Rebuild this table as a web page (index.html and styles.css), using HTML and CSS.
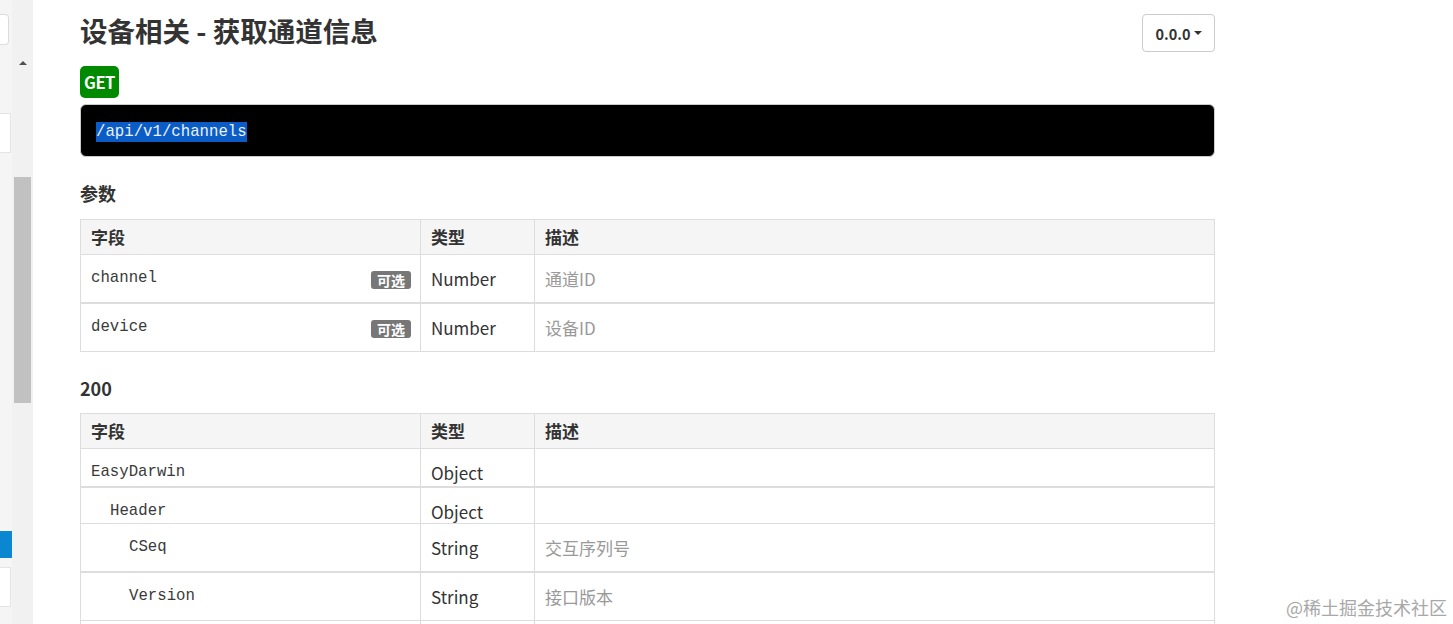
FILE: index.html
```html
<!DOCTYPE html>
<html lang="zh-CN">
<head>
<meta charset="utf-8">
<title>设备相关 - 获取通道信息</title>
<link rel="stylesheet" href="styles.css">
</head>
<body>
<div class="page">
  <aside class="sidebar">
    <div class="side-col">
      <div class="sbox sbox-top"></div>
      <div class="sbox sbox-mid"></div>
      <div class="sbox-active"></div>
      <div class="sbox sbox-bottom"></div>
    </div>
    <div class="scrollbar">
      <div class="scroll-arrow"></div>
      <div class="scroll-thumb"></div>
    </div>
  </aside>
  <main class="main">
    <div class="header">
      <h1 class="title">设备相关 - 获取通道信息</h1>
      <button class="version">0.0.0<span class="caret"></span></button>
    </div>
    <span class="method">GET</span>
    <div class="url"><span class="url-sel">/api/v1/channels</span></div>

    <h2 class="section">参数</h2>
    <table class="fields">
      <colgroup><col class="c1"><col class="c2"><col class="c3"></colgroup>
      <thead>
        <tr><th>字段</th><th>类型</th><th>描述</th></tr>
      </thead>
      <tbody>
        <tr class="tall">
          <td class="name"><div class="name-wrap"><span class="code">channel</span><span class="badge">可选</span></div></td>
          <td class="type">Number</td>
          <td class="desc">通道ID</td>
        </tr>
        <tr class="tall thick">
          <td class="name"><div class="name-wrap"><span class="code">device</span><span class="badge">可选</span></div></td>
          <td class="type">Number</td>
          <td class="desc">设备ID</td>
        </tr>
      </tbody>
    </table>

    <h2 class="section section-200">200</h2>
    <table class="fields">
      <colgroup><col class="c1"><col class="c2"><col class="c3"></colgroup>
      <thead>
        <tr><th>字段</th><th>类型</th><th>描述</th></tr>
      </thead>
      <tbody>
        <tr class="short">
          <td class="name"><span class="code">EasyDarwin</span></td>
          <td class="type">Object</td>
          <td class="desc"></td>
        </tr>
        <tr class="short thick">
          <td class="name"><span class="code lvl1">Header</span></td>
          <td class="type">Object</td>
          <td class="desc"></td>
        </tr>
        <tr class="tall">
          <td class="name"><span class="code lvl2">CSeq</span></td>
          <td class="type">String</td>
          <td class="desc">交互序列号</td>
        </tr>
        <tr class="tall thick">
          <td class="name"><span class="code lvl2">Version</span></td>
          <td class="type">String</td>
          <td class="desc">接口版本</td>
        </tr>
        <tr class="tall">
          <td class="name"></td>
          <td class="type"></td>
          <td class="desc"></td>
        </tr>
      </tbody>
    </table>
  </main>
  <div class="watermark">@稀土掘金技术社区</div>
</div>
</body>
</html>
```

FILE: styles.css
```css
html, body {
  margin: 0;
  padding: 0;
  background: #fff;
  height: 624px;
  overflow: hidden;
}

.page {
  display: flex;
  height: 624px;
  font-family: "Noto Sans CJK SC", "Noto Sans", sans-serif;
  color: #333;
}

/* ---------- sidebar ---------- */
.sidebar {
  width: 33px;
  flex: 0 0 33px;
  display: flex;
  height: 624px;
}

.side-col {
  width: 12px;
  background: #f5f5f5;
  display: flex;
  flex-direction: column;
}

.sbox {
  background: #fff;
  border: 1px solid #dcdcdc;
  border-left: none;
  box-sizing: border-box;
}

.sbox-top {
  width: 9px;
  height: 31px;
  margin-top: 14px;
  border-radius: 0 4px 4px 0;
}

.sbox-mid {
  width: 11px;
  height: 40px;
  margin-top: 68px;
  border-color: #e4e4e4;
}

.sbox-active {
  width: 12px;
  height: 27px;
  margin-top: 378px;
  background: #0a87d0;
}

.sbox-bottom {
  width: 11px;
  height: 40px;
  margin-top: 9px;
  border-color: #e4e4e4;
}

.scrollbar {
  width: 21px;
  background: #f1f1f1;
  display: flex;
  flex-direction: column;
  align-items: center;
}

.scroll-arrow {
  width: 0;
  height: 0;
  margin-top: 61px;
  border-left: 4px solid transparent;
  border-right: 4px solid transparent;
  border-bottom: 4px solid #505050;
}

.scroll-thumb {
  width: 17px;
  height: 226px;
  margin-top: 112px;
  background: #c1c1c1;
}

/* ---------- main ---------- */
.main {
  padding-left: 47px;
  width: 1135px;
}

.header {
  display: flex;
  justify-content: space-between;
  align-items: flex-start;
  padding-top: 12px;
}

.title {
  margin: 0;
  font-size: 27.5px;
  line-height: 36px;
  font-weight: 700;
  color: #333;
}

.version {
  margin-top: 2px;
  width: 73px;
  height: 38px;
  border: 1px solid #ccc;
  border-radius: 4px;
  background: #fff;
  font-family: "Noto Sans CJK SC", "Noto Sans", sans-serif;
  font-size: 14.5px;
  font-weight: 700;
  color: #333;
  padding: 0;
  display: flex;
  align-items: center;
  justify-content: center;
  gap: 3px;
}

.caret {
  width: 0;
  height: 0;
  border-left: 4px solid transparent;
  border-right: 4px solid transparent;
  border-top: 4px solid #333;
}

.method {
  display: inline-flex;
  align-items: center;
  justify-content: center;
  margin-top: 14px;
  width: 39px;
  height: 32px;
  background: #008a00;
  color: #fff;
  font-weight: 700;
  font-size: 16.5px;
  border-radius: 5px;
  letter-spacing: -0.5px;
}

.url {
  margin-top: 6px;
  height: 53px;
  box-sizing: border-box;
  background: #000;
  border: 1px solid #ccc;
  border-radius: 6px;
  display: flex;
  align-items: center;
  padding: 0 15px;
}

.url-sel {
  background: #0b5cc5;
  color: #eaf2ff;
  font-family: "Liberation Mono", "DejaVu Sans Mono", monospace;
  font-size: 15.7px;
  line-height: 20px;
  margin-top: 2px;
}

.section {
  margin: 23px 0 13px;
  font-size: 18px;
  line-height: 26px;
  font-weight: 700;
  color: #333;
}

.section-200 {
  margin-top: 23px;
  margin-bottom: 12px;
}

/* ---------- tables ---------- */
.fields {
  width: 1135px;
  border-collapse: collapse;
  table-layout: fixed;
}

.c1 { width: 340px; }
.c2 { width: 114px; }

.fields th,
.fields td {
  border: 1px solid #ddd;
  padding: 0 10px;
  text-align: left;
  vertical-align: top;
  box-sizing: border-box;
}

.fields th {
  background: #f5f5f5;
  height: 34px;
  font-size: 17px;
  line-height: 34px;
  font-weight: 700;
  color: #333;
}

.fields tr.thick td {
  border-top: 2px solid #ddd;
}

.fields tr.tall td { height: 48px; }
.fields tr.tall.thick td { height: 49px; }
.fields tr.short td { height: 38px; }
.fields tr.short.thick td { height: 37px; }

.fields td.name {
  padding-top: 13px;
  line-height: 20px;
  font-size: 15px;
}

.name-wrap {
  display: flex;
  justify-content: space-between;
  align-items: flex-start;
}

.code {
  font-family: "Liberation Mono", "DejaVu Sans Mono", monospace;
  font-size: 15.7px;
  line-height: 20px;
  color: #3a3a3a;
  display: block;
}

.lvl1 { padding-left: 19px; }
.lvl2 { padding-left: 38px; }

.badge {
  margin-top: 3px;
  margin-right: -1px;
  background: #777;
  color: #fff;
  font-size: 14px;
  font-weight: 700;
  line-height: 18px;
  height: 18px;
  padding: 0 6px;
  border-radius: 3px;
}

.fields td.type,
.fields td.desc {
  font-size: 17px;
  line-height: 22px;
  padding-top: 13px;
}

.fields td.type { color: #333; }
.fields td.desc { color: #999; }

.fields tr.short td.type { padding-top: 13px; }

.watermark {
  position: absolute;
  right: 6px;
  top: 595px;
  font-size: 18px;
  line-height: 24px;
  color: #a8a8a8;
  font-family: "Noto Sans CJK SC", sans-serif;
}
```
